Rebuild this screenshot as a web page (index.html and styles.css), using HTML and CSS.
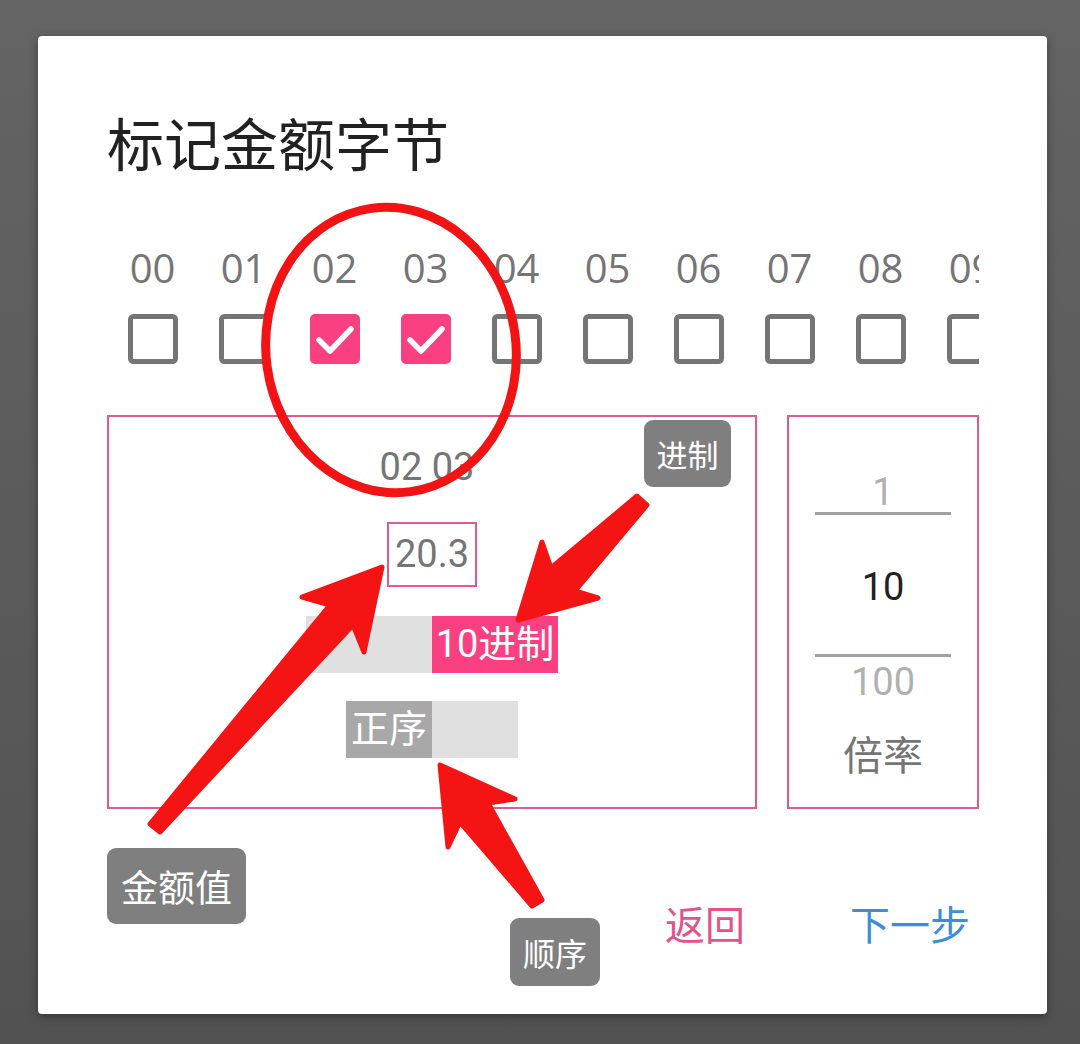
FILE: index.html
```html
<!DOCTYPE html>
<html lang="zh">
<head>
<meta charset="utf-8">
<title>标记金额字节</title>
<link rel="stylesheet" href="styles.css">
</head>
<body>
<div class="dialog">
  <h1 class="title">标记金额字节</h1>
  <div class="bytes">
    <div class="byte"><span class="byte-label">00</span><svg class="check" viewBox="0 0 50 50"><rect class="box-off" x="2.5" y="2.5" width="45" height="45" rx="3"/></svg></div>
    <div class="byte"><span class="byte-label">01</span><svg class="check" viewBox="0 0 50 50"><rect class="box-off" x="2.5" y="2.5" width="45" height="45" rx="3"/></svg></div>
    <div class="byte"><span class="byte-label">02</span><svg class="check" viewBox="0 0 50 50"><rect class="box-on" x="0" y="0" width="50" height="50" rx="5"/><polyline class="tick" points="9,26 20,37 41,15"/></svg></div>
    <div class="byte"><span class="byte-label">03</span><svg class="check" viewBox="0 0 50 50"><rect class="box-on" x="0" y="0" width="50" height="50" rx="5"/><polyline class="tick" points="9,26 20,37 41,15"/></svg></div>
    <div class="byte"><span class="byte-label">04</span><svg class="check" viewBox="0 0 50 50"><rect class="box-off" x="2.5" y="2.5" width="45" height="45" rx="3"/></svg></div>
    <div class="byte"><span class="byte-label">05</span><svg class="check" viewBox="0 0 50 50"><rect class="box-off" x="2.5" y="2.5" width="45" height="45" rx="3"/></svg></div>
    <div class="byte"><span class="byte-label">06</span><svg class="check" viewBox="0 0 50 50"><rect class="box-off" x="2.5" y="2.5" width="45" height="45" rx="3"/></svg></div>
    <div class="byte"><span class="byte-label">07</span><svg class="check" viewBox="0 0 50 50"><rect class="box-off" x="2.5" y="2.5" width="45" height="45" rx="3"/></svg></div>
    <div class="byte"><span class="byte-label">08</span><svg class="check" viewBox="0 0 50 50"><rect class="box-off" x="2.5" y="2.5" width="45" height="45" rx="3"/></svg></div>
    <div class="byte"><span class="byte-label">09</span><svg class="check" viewBox="0 0 50 50"><rect class="box-off" x="2.5" y="2.5" width="45" height="45" rx="3"/></svg></div>
  </div>
  <div class="panels">
    <div class="panel panel-main">
      <div class="picked">02 03</div>
      <div class="amount">20.3</div>
      <div class="switch">
        <span class="seg seg-empty seg-wide"></span>
        <span class="seg seg-pink seg-wide">10进制</span>
      </div>
      <div class="switch switch-order">
        <span class="seg seg-dark seg-narrow">正序</span>
        <span class="seg seg-empty seg-narrow"></span>
      </div>
    </div>
    <div class="panel panel-picker">
      <div class="pick-row pick-faded">1</div>
      <div class="divider"></div>
      <div class="pick-row pick-current">10</div>
      <div class="divider divider-low"></div>
      <div class="pick-row pick-faded pick-next">100</div>
      <div class="pick-caption">倍率</div>
    </div>
  </div>
  <div class="actions">
    <span class="btn btn-back">返回</span>
    <span class="btn btn-next">下一步</span>
  </div>
</div>

<svg class="marks" width="1080" height="1044" viewBox="0 0 1080 1044">
  <ellipse class="ring" cx="391" cy="350" rx="125" ry="143" transform="rotate(-8 391 350)"/>
  <polygon class="arrow" points="150,824 330,605 302,597 382,567 364,652 353,625 160,832"/>
  <polygon class="arrow" points="637,496 551,568 542,542 518,620 598,598 575,591 647,505"/>
  <polygon class="arrow" points="440,765 515,799 488,803 542,900 532,906 460,822 448,847"/>
</svg>
<div class="tag tag-radix">进制</div>
<div class="tag tag-amount">金额值</div>
<div class="tag tag-order">顺序</div>
</body>
</html>
```

FILE: styles.css
```css
html, body {
  margin: 0;
}

body {
  position: relative;
  width: 1080px;
  height: 1044px;
  overflow: hidden;
  box-sizing: border-box;
  padding-top: 36px;
  background: linear-gradient(#646464, #525252);
  font-family: Roboto, "Noto Sans CJK SC", sans-serif;
}

.dialog {
  margin-left: 38px;
  width: 1009px;
  height: 978px;
  box-sizing: border-box;
  padding: 73px 68px 0 69px;
  background: #fff;
  border-radius: 4px;
  box-shadow: 0 3px 10px rgba(0, 0, 0, 0.35);
}

.title {
  margin: 0;
  font: 400 57px/64px "Noto Sans CJK SC", sans-serif;
  color: #212121;
}

.bytes {
  display: flex;
  width: 872px;
  margin-top: 64px;
  padding-top: 4px;
  overflow: hidden;
}

.byte {
  flex: 0 0 91px;
  display: flex;
  flex-direction: column;
  align-items: center;
}

.byte-label {
  font: 400 40px/54px "Open Sans", sans-serif;
  color: #757575;
}

.check {
  display: block;
  width: 50px;
  height: 50px;
  margin-top: 19px;
}

.box-off {
  fill: none;
  stroke: #757575;
  stroke-width: 5;
}

.box-on {
  fill: #fb4081;
}

.tick {
  fill: none;
  stroke: #fff;
  stroke-width: 5.5;
  stroke-linecap: round;
  stroke-linejoin: round;
}

.panels {
  display: flex;
  gap: 30px;
  height: 394px;
  margin-top: 51px;
}

.panel {
  box-sizing: border-box;
  border: 2px solid #e05a8c;
}

.panel-main {
  width: 650px;
  display: flex;
  flex-direction: column;
  align-items: center;
  padding-top: 28px;
}

.picked {
  margin-right: 10px;
  font-size: 38px;
  line-height: 44px;
  color: #757575;
}

.amount {
  margin-top: 33px;
  padding: 0 6px;
  border: 2px solid #e05a8c;
  font-size: 38px;
  line-height: 61px;
  color: #757575;
}

.switch {
  display: flex;
  height: 57px;
  margin-top: 29px;
}

.switch-order {
  margin-top: 28px;
}

.seg {
  display: flex;
  align-items: center;
  justify-content: center;
  height: 57px;
  font-size: 38px;
  line-height: 57px;
  color: #fff;
  white-space: nowrap;
}

.seg-wide {
  width: 126px;
}

.seg-narrow {
  width: 86px;
}

.seg-empty {
  background: #e0e0e0;
}

.seg-pink {
  background: #fb4081;
}

.seg-dark {
  background: #a8a8a8;
}

.panel-picker {
  flex: 1;
  display: flex;
  flex-direction: column;
  align-items: center;
  padding-top: 53px;
}

.pick-row {
  height: 42px;
  font-size: 38px;
  line-height: 44px;
}

.pick-faded {
  color: #b0b0b0;
}

.pick-current {
  height: 44px;
  margin-top: 50px;
  color: #212121;
}

.pick-next {
  height: 44px;
  margin-top: 3px;
}

.divider {
  width: 136px;
  height: 3px;
  background: #a0a0a0;
}

.divider-low {
  margin-top: 45px;
}

.pick-caption {
  margin-top: 25px;
  font: 400 40px/48px "Noto Sans CJK SC", sans-serif;
  color: #757575;
}

.actions {
  display: flex;
  justify-content: flex-end;
  gap: 87px;
  margin-top: 90px;
}

.btn {
  padding: 0 9px;
  font: 400 40px/48px "Noto Sans CJK SC", sans-serif;
}

.btn-back {
  color: #e2538a;
}

.btn-next {
  color: #3b8ed8;
}

.marks {
  position: absolute;
  left: 0;
  top: 0;
  pointer-events: none;
}

.ring {
  fill: none;
  stroke: #f21414;
  stroke-width: 9;
}

.arrow {
  fill: #f51414;
  stroke: #f51414;
  stroke-width: 5;
  stroke-linejoin: round;
}

.tag {
  position: absolute;
  display: flex;
  align-items: center;
  justify-content: center;
  box-sizing: border-box;
  background: #7f7f7f;
  border-radius: 9px;
  color: #fff;
  font-family: "Noto Sans CJK SC", sans-serif;
}

.tag-radix {
  left: 644px;
  top: 420px;
  width: 87px;
  height: 67px;
  font-size: 31px;
}

.tag-amount {
  left: 107px;
  top: 848px;
  width: 139px;
  height: 76px;
  font-size: 37px;
}

.tag-order {
  left: 510px;
  top: 918px;
  width: 90px;
  height: 68px;
  font-size: 32px;
}
```
